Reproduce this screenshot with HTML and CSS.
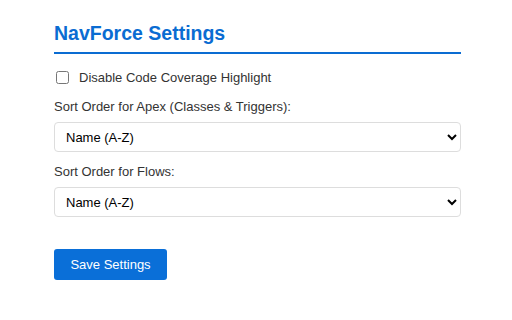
FILE: index.html
```html
<!DOCTYPE html>
<html>
<head>
<meta charset="utf-8">
<link rel="stylesheet" href="styles.css">
</head>
<body>
<div class="container">
  <h1 class="title">NavForce Settings</h1>
  <label class="check-row">
    <input type="checkbox" class="check">
    <span>Disable Code Coverage Highlight</span>
  </label>
  <div class="field">
    <label class="field-label">Sort Order for Apex (Classes &amp; Triggers):</label>
    <select class="select">
      <option>Name (A-Z)</option>
    </select>
  </div>
  <div class="field">
    <label class="field-label">Sort Order for Flows:</label>
    <select class="select">
      <option>Name (A-Z)</option>
    </select>
  </div>
  <button class="save">Save Settings</button>
</div>
</body>
</html>
```
FILE: styles.css
```css
html, body {
  margin: 0;
  padding: 0;
  background: #fff;
}
body {
  font-family: "Liberation Sans", Arial, sans-serif;
  color: #333;
  font-size: 13px;
}
.container {
  width: 407px;
  padding: 22px 0 0 54px;
  display: flex;
  flex-direction: column;
}
.title {
  margin: 0;
  font-size: 19.5px;
  line-height: 23px;
  font-weight: bold;
  color: #0a6cd2;
  padding-bottom: 7px;
  border-bottom: 2px solid #0a6cd2;
}
.check-row {
  display: flex;
  align-items: center;
  gap: 10px;
  margin-top: 14px;
  height: 18px;
}
.check {
  margin: 0 0 0 2px;
  width: 13px;
  height: 13px;
}
.field {
  display: flex;
  flex-direction: column;
  margin-top: 13px;
}
.field + .field {
  margin-top: 12px;
}
.field-label {
  line-height: 16px;
  margin-bottom: 7px;
}
.select {
  height: 30px;
  border: 1px solid #ddd;
  border-radius: 4px;
  padding: 0 7px;
  font-family: "Liberation Sans", Arial, sans-serif;
  font-size: 13px;
  color: #000;
  background: #fff;
}
.save {
  align-self: flex-start;
  margin-top: 32px;
  width: 113px;
  height: 31px;
  border: none;
  border-radius: 3px;
  background: #0a6fd8;
  color: #fff;
  font-family: "Liberation Sans", Arial, sans-serif;
  font-size: 13px;
}
```
